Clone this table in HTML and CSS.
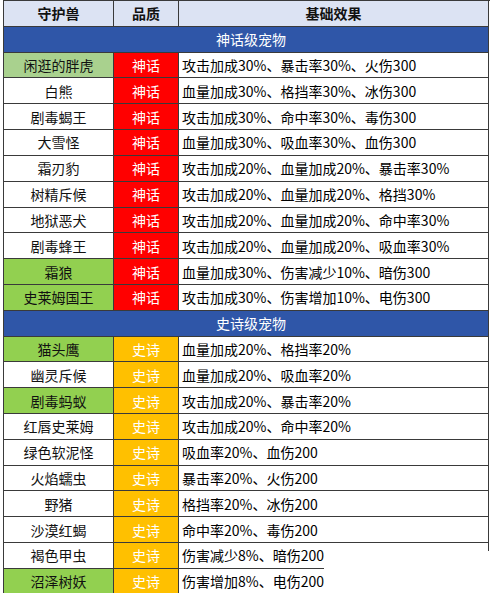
FILE: index.html
```html
<!DOCTYPE html>
<html lang="zh-CN">
<head>
<meta charset="utf-8">
<title>守护兽</title>
<link rel="stylesheet" href="styles.css">
</head>
<body>
<div class="table">
  <div class="cell head">守护兽</div>
  <div class="cell head">品质</div>
  <div class="cell head">基础效果</div>

  <div class="cell section">神话级宠物</div>

  <div class="cell name lightgreen">闲逛的胖虎</div><div class="cell q myth">神话</div><div class="cell fx">攻击加成30%、暴击率30%、火伤300</div>
  <div class="cell name">白熊</div><div class="cell q myth">神话</div><div class="cell fx">血量加成30%、格挡率30%、冰伤300</div>
  <div class="cell name">剧毒蝎王</div><div class="cell q myth">神话</div><div class="cell fx">攻击加成30%、命中率30%、毒伤300</div>
  <div class="cell name">大雪怪</div><div class="cell q myth">神话</div><div class="cell fx">血量加成30%、吸血率30%、血伤300</div>
  <div class="cell name">霜刃豹</div><div class="cell q myth">神话</div><div class="cell fx">攻击加成20%、血量加成20%、暴击率30%</div>
  <div class="cell name">树精斥候</div><div class="cell q myth">神话</div><div class="cell fx">攻击加成20%、血量加成20%、格挡30%</div>
  <div class="cell name">地狱恶犬</div><div class="cell q myth">神话</div><div class="cell fx">攻击加成20%、血量加成20%、命中率30%</div>
  <div class="cell name">剧毒蜂王</div><div class="cell q myth">神话</div><div class="cell fx">攻击加成20%、血量加成20%、吸血率30%</div>
  <div class="cell name green">霜狼</div><div class="cell q myth">神话</div><div class="cell fx">血量加成30%、伤害减少10%、暗伤300</div>
  <div class="cell name green">史莱姆国王</div><div class="cell q myth">神话</div><div class="cell fx">攻击加成30%、伤害增加10%、电伤300</div>

  <div class="cell section">史诗级宠物</div>

  <div class="cell name green">猫头鹰</div><div class="cell q epic">史诗</div><div class="cell fx">血量加成20%、格挡率20%</div>
  <div class="cell name">幽灵斥候</div><div class="cell q epic">史诗</div><div class="cell fx">血量加成20%、吸血率20%</div>
  <div class="cell name green">剧毒蚂蚁</div><div class="cell q epic">史诗</div><div class="cell fx">攻击加成20%、暴击率20%</div>
  <div class="cell name">红唇史莱姆</div><div class="cell q epic">史诗</div><div class="cell fx">攻击加成20%、命中率20%</div>
  <div class="cell name">绿色软泥怪</div><div class="cell q epic">史诗</div><div class="cell fx">吸血率20%、血伤200</div>
  <div class="cell name">火焰蠕虫</div><div class="cell q epic">史诗</div><div class="cell fx">暴击率20%、火伤200</div>
  <div class="cell name">野猪</div><div class="cell q epic">史诗</div><div class="cell fx">格挡率20%、冰伤200</div>
  <div class="cell name">沙漠红蝎</div><div class="cell q epic">史诗</div><div class="cell fx tail-edge">命中率20%、毒伤200</div>
  <div class="cell name">褐色甲虫</div><div class="cell q epic">史诗</div><div class="cell fx open short">伤害减少8%、暗伤200</div>
  <div class="cell name green">沼泽树妖</div><div class="cell q epic">史诗</div><div class="cell fx open">伤害增加8%、电伤200</div>
</div>
</body>
</html>
```

FILE: styles.css
```css
html, body {
  margin: 0;
  padding: 0;
  background: #ffffff;
}

body {
  font-family: "Noto Sans CJK SC", "Noto Sans", sans-serif;
  font-size: 14px;
  color: #000000;
  overflow: hidden;
}

.table {
  display: grid;
  grid-template-columns: 110px 65px 310px;
  grid-auto-rows: 25.82px;
  width: 486px;
  margin-left: 3px;
  border-left: 1px solid #3a3a3a;
  border-top: 1px solid #3a3a3a;
}

.cell {
  box-sizing: border-box;
  border-right: 1px solid #3a3a3a;
  border-bottom: 1px solid #3a3a3a;
  display: flex;
  align-items: center;
  justify-content: center;
  white-space: nowrap;
  line-height: 1;
  position: relative;
}

.head {
  background: #dce3f3;
  font-weight: bold;
  color: #111111;
}

.section {
  grid-column: 1 / 4;
  background: #2f56a8;
  color: #ffffff;
  padding-left: 10px;
}

.name {
  color: #111111;
}

.lightgreen {
  background: #a9d18e;
}

.green {
  background: #92d050;
}

.q {
  color: #ffffff;
}

.myth {
  background: #ff0000;
}

.epic {
  background: #ffc000;
}

.fx {
  justify-content: flex-start;
  padding-left: 3px;
  color: #000000;
}

.tail-edge::after {
  content: "";
  position: absolute;
  right: -1px;
  top: 100%;
  width: 1px;
  height: 9px;
  background: #3a3a3a;
}

.open {
  border-right-color: transparent;
  border-bottom-color: transparent;
}

.short::after {
  content: "";
  position: absolute;
  left: 0;
  bottom: -1px;
  width: 145px;
  height: 1px;
  background: #3a3a3a;
}
```
